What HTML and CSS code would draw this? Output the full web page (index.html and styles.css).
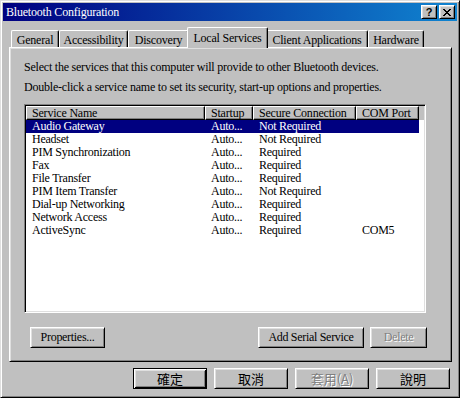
FILE: index.html
```html
<!DOCTYPE html>
<html lang="en">
<head>
<meta charset="utf-8">
<title>Bluetooth Configuration</title>
<link rel="stylesheet" href="styles.css">
</head>
<body>
<div class="window">
  <div class="titlebar">
    <span class="title">Bluetooth Configuration</span>
    <div class="title-buttons">
      <span class="tbtn"><span class="help-glyph">?</span></span>
      <span class="tbtn">
        <svg width="8" height="7" viewBox="0 0 8 7" shape-rendering="crispEdges"><path d="M0 0h2v1h-2zM6 0h2v1h-2zM1 1h2v1h-2zM5 1h2v1h-2zM2 2h4v1h-4zM3 3h2v1h-2zM2 4h4v1h-4zM1 5h2v1h-2zM5 5h2v1h-2zM0 6h2v1h-2zM6 6h2v1h-2z" fill="#000"/></svg>
      </span>
    </div>
  </div>

  <div class="tabs">
    <div class="tab tab-general">General</div>
    <div class="tab tab-access">Accessibility</div>
    <div class="tab tab-discovery">Discovery</div>
    <div class="tab tab-local active">Local Services</div>
    <div class="tab tab-client">Client Applications</div>
    <div class="tab tab-hardware">Hardware</div>
  </div>

  <div class="panel">
    <p class="desc">Select the services that this computer will provide to other Bluetooth devices.</p>
    <p class="desc second">Double-click a service name to set its security, start-up options and properties.</p>

    <div class="listview">
      <div class="lv-header">
        <div class="hcell">Service Name</div>
        <div class="hcell">Startup</div>
        <div class="hcell">Secure Connection</div>
        <div class="hcell">COM Port</div>
      </div>
      <div class="lv-row selected"><span>Audio Gateway</span><span>Auto...</span><span>Not Required</span><span></span></div>
      <div class="lv-row"><span>Headset</span><span>Auto...</span><span>Not Required</span><span></span></div>
      <div class="lv-row"><span>PIM Synchronization</span><span>Auto...</span><span>Required</span><span></span></div>
      <div class="lv-row"><span>Fax</span><span>Auto...</span><span>Required</span><span></span></div>
      <div class="lv-row"><span>File Transfer</span><span>Auto...</span><span>Required</span><span></span></div>
      <div class="lv-row"><span>PIM Item Transfer</span><span>Auto...</span><span>Not Required</span><span></span></div>
      <div class="lv-row"><span>Dial-up Networking</span><span>Auto...</span><span>Required</span><span></span></div>
      <div class="lv-row"><span>Network Access</span><span>Auto...</span><span>Required</span><span></span></div>
      <div class="lv-row"><span>ActiveSync</span><span>Auto...</span><span>Required</span><span>COM5</span></div>
    </div>

    <div class="panel-buttons">
      <button class="btn btn-props">Properties...</button>
      <span class="spacer"></span>
      <button class="btn btn-serial">Add Serial Service</button>
      <button class="btn btn-delete" disabled>Delete</button>
    </div>
  </div>

  <div class="dialog-buttons">
    <button class="btn btn-dlg cjk default">確定</button>
    <button class="btn btn-dlg cjk">取消</button>
    <button class="btn btn-dlg cjk" disabled>套用(<u>A</u>)</button>
    <button class="btn btn-dlg cjk">說明</button>
  </div>
</div>
</body>
</html>
```

FILE: styles.css
```css
html, body {
  margin: 0;
  padding: 0;
  background: #c0c0c0;
}

body {
  width: 460px;
  height: 398px;
  font-family: "Liberation Serif", "Times New Roman", serif;
  font-size: 12px;
  color: #000;
}

.window {
  box-sizing: border-box;
  width: 460px;
  height: 398px;
  background: #c0c0c0;
  border: 1px solid;
  border-color: #dfdfdf #000 #000 #dfdfdf;
  box-shadow: inset 1px 1px #fff, inset -1px -1px #808080;
  padding: 2px;
  display: flex;
  flex-direction: column;
}

/* Title bar */
.titlebar {
  height: 18px;
  flex: none;
  display: flex;
  align-items: center;
  padding: 0 2px 0 3px;
  background: linear-gradient(90deg, #000080 0%, #1084d0 100%);
  color: #fff;
}

.title {
  flex: 1;
  font-size: 12px;
  letter-spacing: -0.2px;
  white-space: nowrap;
}

.title-buttons {
  display: flex;
  gap: 2px;
}

.tbtn {
  box-sizing: border-box;
  width: 16px;
  height: 14px;
  background: #c0c0c0;
  border: 1px solid;
  border-color: #fff #000 #000 #fff;
  box-shadow: inset 1px 1px #dfdfdf, inset -1px -1px #808080;
  display: flex;
  align-items: center;
  justify-content: center;
}

.help-glyph {
  font-family: "Liberation Sans", Arial, sans-serif;
  font-weight: bold;
  font-size: 11px;
  line-height: 11px;
  color: #000;
}

/* Tabs */
.tabs {
  flex: none;
  height: 26px;
  display: flex;
  align-items: flex-end;
  padding-left: 8px;
}

.tab {
  box-sizing: border-box;
  height: 17px;
  padding-top: 2px;
  text-align: center;
  white-space: nowrap;
  letter-spacing: -0.2px;
  background: #c0c0c0;
  border-top: 1px solid #fff;
  border-left: 1px solid #fff;
  border-right: 1px solid #000;
  border-top-left-radius: 2px;
  border-top-right-radius: 2px;
  box-shadow: inset -1px 0 #808080;
}

.tab-general { width: 48px; }
.tab-access { width: 69px; }
.tab-discovery { width: 61px; }
.tab-local { width: 81px; }
.tab-client { width: 102px; }
.tab-hardware { width: 56px; }

.tab.active {
  position: relative;
  z-index: 2;
  height: 21px;
  margin: 0 -2px -1px -2px;
  padding-top: 3px;
}

/* Panel */
.panel {
  box-sizing: border-box;
  height: 315px;
  flex: none;
  margin: 0 5px 0 6px;
  padding: 12px 25px 0 14px;
  border: 1px solid;
  border-color: #fff #000 #000 #fff;
  box-shadow: inset 1px 1px #dfdfdf, inset -1px -1px #808080;
  display: flex;
  flex-direction: column;
}

.desc {
  margin: 0;
  line-height: 14px;
  height: 14px;
  white-space: nowrap;
  letter-spacing: -0.22px;
}

.desc.second {
  margin-top: 6px;
}

/* List view */
.listview {
  box-sizing: border-box;
  margin-top: 10px;
  height: 209px;
  background: #fff;
  border: 1px solid;
  border-color: #808080 #fff #fff #808080;
  box-shadow: inset 1px 1px #000, inset -1px -1px #dfdfdf;
  padding: 1px;
  overflow: hidden;
}

.lv-header {
  display: grid;
  grid-template-columns: 179px 48px 103px 63px;
  height: 14px;
  background: #c0c0c0;
}

.hcell {
  box-sizing: border-box;
  height: 14px;
  line-height: 12px;
  padding-left: 5px;
  white-space: nowrap;
  overflow: hidden;
  letter-spacing: -0.2px;
  border: 1px solid;
  border-color: #fff #000 #000 #fff;
  box-shadow: inset -1px -1px #808080;
}

.lv-row {
  display: grid;
  grid-template-columns: 179px 48px 103px 63px;
  width: 393px;
  height: 13px;
  line-height: 13px;
}

.lv-row span {
  padding-left: 6px;
  white-space: nowrap;
  overflow: hidden;
  letter-spacing: -0.25px;
}

.lv-row.selected {
  background: #000080;
  color: #fff;
}

/* Buttons */
.btn {
  box-sizing: border-box;
  height: 21px;
  padding: 0;
  margin: 0;
  font-family: "Liberation Serif", "Times New Roman", serif;
  font-size: 12px;
  letter-spacing: -0.3px;
  color: #000;
  background: #c0c0c0;
  border: 1px solid;
  border-color: #fff #000 #000 #fff;
  box-shadow: inset 1px 1px #dfdfdf, inset -1px -1px #808080;
  border-radius: 0;
  white-space: nowrap;
}

.btn:disabled {
  color: #808080;
  text-shadow: 1px 1px #fff;
}

.panel-buttons {
  display: flex;
  gap: 6px;
  margin-top: 14px;
  margin-right: -1px;
  padding-left: 6px;
}

.spacer {
  flex: 1;
}

.btn-props { width: 75px; }
.btn-serial { width: 106px; }
.btn-delete { width: 57px; }

.dialog-buttons {
  display: flex;
  justify-content: flex-end;
  gap: 7px;
  margin-top: 6px;
  padding-right: 7px;
}

.btn-dlg {
  width: 74px;
}

.cjk {
  font-family: "Noto Sans CJK TC", "Noto Sans CJK SC", sans-serif;
  font-size: 13px;
  letter-spacing: 0;
}

.btn.default {
  border-color: #000;
  box-shadow: inset 1px 1px #fff, inset -1px -1px #000, inset 2px 2px #dfdfdf, inset -2px -2px #808080;
}
```
